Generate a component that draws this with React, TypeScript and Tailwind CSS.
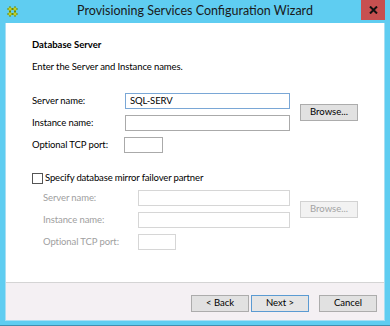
import React from 'react';

const font = { fontFamily: 'Lato, "Noto Sans", sans-serif' };

// ==================== Small pieces ====================
const TextBox: React.FC<{ width: string; value?: string; focused?: boolean; disabled?: boolean }> = ({
  width,
  value,
  focused,
  disabled,
}) => (
  <div
    className={`${width} h-[16px] border bg-white flex items-center px-[4px] text-[9.5px] tracking-[-0.1px] text-black whitespace-nowrap ${
      focused ? 'border-[#7aa7d6]' : disabled ? 'border-[#d6d6d6]' : 'border-[#aaaaaa]'
    }`}
  >
    {value}
  </div>
);

const Button: React.FC<{ label: string; disabled?: boolean; primary?: boolean; className?: string }> = ({
  label,
  disabled,
  primary,
  className = '',
}) => (
  <div
    className={`w-[58px] h-[17px] flex items-center justify-center border text-[9.5px] whitespace-nowrap ${
      disabled
        ? 'border-[#d2d2d2] bg-[#f2f2f2] text-[#a3a3a3]'
        : primary
        ? 'border-[#5b9bd2] bg-[#e5e5e5] text-black'
        : 'border-[#acacac] bg-[#e1e1e1] text-black'
    } ${className}`}
  >
    {label}
  </div>
);

const Row: React.FC<{ label: string; labelWidth: string; disabled?: boolean; children: React.ReactNode }> = ({
  label,
  labelWidth,
  disabled,
  children,
}) => (
  <div className="flex items-center h-[16px]">
    <span
      className={`${labelWidth} shrink-0 whitespace-nowrap text-[9.5px] tracking-[-0.1px] ${
        disabled ? 'text-[#a0a0a0]' : 'text-black'
      }`}
    >
      {label}
    </span>
    {children}
  </div>
);

// PVS-style "#" logo
const AppIcon = () => (
  <svg width="11" height="11" viewBox="0 0 11 11">
    <path d="M3 0.5 V10.5 M8 0.5 V10.5 M0.5 3 H10.5 M0.5 8 H10.5" stroke="#5f8a1a" strokeWidth="2" />
    <rect x="1.5" y="1.5" width="3" height="3" fill="#c2cf2a" />
    <rect x="6.5" y="1.5" width="3" height="3" fill="#c2cf2a" />
    <rect x="1.5" y="6.5" width="3" height="3" fill="#c2cf2a" />
    <rect x="6.5" y="6.5" width="3" height="3" fill="#c2cf2a" />
  </svg>
);

// ==================== Wizard ====================
export default function App() {
  return (
    <div className="w-[390px] h-[326px] bg-[#5fcdf1] border-b border-[#3f8fb0] flex flex-col" style={font}>
      {/* Title bar */}
      <div className="h-[23px] flex items-start shrink-0">
        <div className="w-[29px] h-[23px] flex items-center pl-[7px] pb-[1px]">
          <AppIcon />
        </div>
        <div className="flex-1 h-[23px] flex items-center justify-center text-[12.5px] text-[#1a1a1a] pb-[1px]">
          Provisioning Services Configuration Wizard
        </div>
        <div className="w-[24px] h-[20px] mr-[5px] bg-[#c75050] flex items-center justify-center">
          <svg width="9" height="8" viewBox="0 0 9 8">
            <path d="M1 0.5 L8 7.5 M8 0.5 L1 7.5" stroke="#111" strokeWidth="2" />
          </svg>
        </div>
      </div>

      {/* Client area */}
      <div className="mx-[5px] h-[298px] flex flex-col border border-[#a8def3] border-t-0">
        <div className="bg-white flex-1 pl-[26px] pt-[15px] flex flex-col">
          <div className="text-[9.5px] font-bold text-black leading-[14px]">Database Server</div>
          <div className="text-[9.5px] tracking-[-0.1px] text-black leading-[14px] mt-[8px]">
            Enter the Server and Instance names.
          </div>

          <div className="flex items-center mt-[19px]">
            <div className="flex flex-col gap-[6px]">
              <Row label="Server name:" labelWidth="w-[93px]">
                <TextBox width="w-[165px]" value="SQL-SERV" focused />
              </Row>
              <Row label="Instance name:" labelWidth="w-[93px]">
                <TextBox width="w-[165px]" />
              </Row>
            </div>
            <Button label="Browse..." className="ml-[10px]" />
          </div>
          <div className="mt-[6px]">
            <Row label="Optional TCP port:" labelWidth="w-[92px]">
              <TextBox width="w-[39px]" />
            </Row>
          </div>

          <div className="flex items-center mt-[20px] h-[11px]">
            <div className="w-[11px] h-[11px] border border-[#555] bg-white shrink-0" />
            <span className="ml-[2px] text-[9.5px] tracking-[-0.15px] text-black whitespace-nowrap">
              Specify database mirror failover partner
            </span>
          </div>

          <div className="pl-[11px] mt-[6px]">
            <div className="flex items-center">
              <div className="flex flex-col gap-[6px]">
                <Row label="Server name:" labelWidth="w-[95px]" disabled>
                  <TextBox width="w-[152px]" disabled />
                </Row>
                <Row label="Instance name:" labelWidth="w-[95px]" disabled>
                  <TextBox width="w-[152px]" disabled />
                </Row>
              </div>
              <Button label="Browse..." className="ml-[10px]" disabled />
            </div>
            <div className="mt-[6px]">
              <Row label="Optional TCP port:" labelWidth="w-[95px]" disabled>
                <TextBox width="w-[38px]" disabled />
              </Row>
            </div>
          </div>
        </div>

        {/* Footer */}
        <div className="h-[38px] border-t border-[#d4d4d4] bg-[#f4f0f3] flex items-start justify-end pt-[12px] pr-[7px] shrink-0">
          <Button label="< Back" />
          <Button label="Next >" primary className="ml-[2px]" />
          <Button label="Cancel" className="ml-[10px]" />
        </div>
      </div>
    </div>
  );
}
